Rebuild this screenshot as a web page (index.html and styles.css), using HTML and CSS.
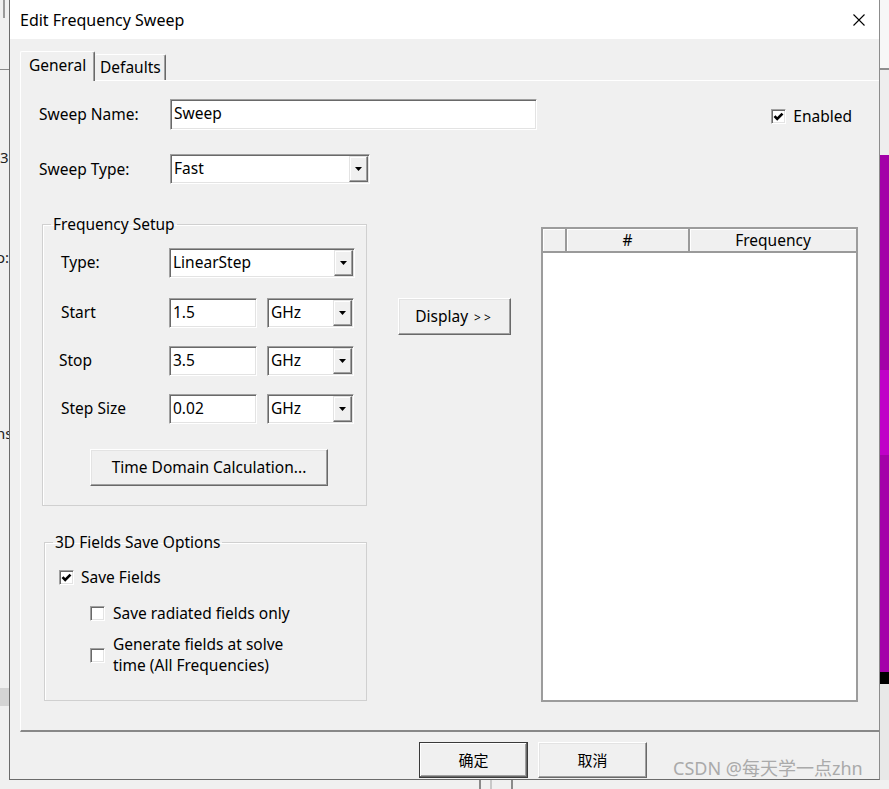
FILE: index.html
```html
<!DOCTYPE html>
<html>
<head>
<meta charset="utf-8">
<title>Edit Frequency Sweep</title>
<link rel="stylesheet" href="styles.css">
</head>
<body>
<div class="bg-left">
  <div class="bl-top"></div>
  <div class="bl-hline"></div>
  <span class="frag f1">3</span>
  <span class="frag f2">o:</span>
  <span class="frag f3">ns</span>
  <div class="bl-bottom"></div>
</div>
<div class="bg-right">
  <div class="br-top"></div>
  <div class="br-line"></div>
  <div class="br-mid"></div>
  <div class="br-purple"></div>
  <div class="br-magenta"></div>
  <div class="br-purple2"></div>
  <div class="br-black"></div>
  <div class="br-rest"></div>
</div>
<div class="bg-bottom">
  <span class="vl vl1"></span><span class="vl vl2"></span><span class="vl vl3"></span>
</div>

<div class="dialog">
  <div class="titlebar">
    <span class="title">Edit Frequency Sweep</span>
    <svg class="close" width="12" height="12" viewBox="0 0 12 12"><path d="M0.5 0.5 L11.5 11.5 M11.5 0.5 L0.5 11.5" stroke="#000" stroke-width="1.1" fill="none"/></svg>
  </div>
  <div class="dlg-body">
    <div class="tabs">
      <div class="tab active">General</div>
      <div class="tab">Defaults</div>
    </div>
    <div class="panel">
      <div class="row row-name">
        <span class="lbl">Sweep Name:</span>
        <div class="edit edit-name">Sweep</div>
        <div class="check enabled">
          <span class="cb"><svg width="13" height="13" viewBox="0 0 13 13"><path d="M2.5 6.2 L5.2 9 L10.5 3.6" stroke="#000" stroke-width="2.6" fill="none"/></svg></span>
          <span>Enabled</span>
        </div>
      </div>
      <div class="row row-type">
        <span class="lbl">Sweep Type:</span>
        <div class="combo combo-type"><span class="combo-text">Fast</span><span class="drop"><svg width="7" height="4" viewBox="0 0 7 4"><polygon points="0,0 7,0 3.5,4" fill="#000"/></svg></span></div>
      </div>

      <div class="main">
        <div class="leftcol">
          <fieldset class="group freq">
            <legend>Frequency Setup</legend>
            <div class="frow frow-type">
              <span class="flbl">Type:</span>
              <div class="combo combo-lin"><span class="combo-text">LinearStep</span><span class="drop"><svg width="7" height="4" viewBox="0 0 7 4"><polygon points="0,0 7,0 3.5,4" fill="#000"/></svg></span></div>
            </div>
            <div class="frow frow-start">
              <span class="flbl">Start</span>
              <div class="edit edit-val">1.5</div>
              <div class="combo combo-unit"><span class="combo-text">GHz</span><span class="drop"><svg width="7" height="4" viewBox="0 0 7 4"><polygon points="0,0 7,0 3.5,4" fill="#000"/></svg></span></div>
            </div>
            <div class="frow">
              <span class="flbl flbl-stop">Stop</span>
              <div class="edit edit-val">3.5</div>
              <div class="combo combo-unit"><span class="combo-text">GHz</span><span class="drop"><svg width="7" height="4" viewBox="0 0 7 4"><polygon points="0,0 7,0 3.5,4" fill="#000"/></svg></span></div>
            </div>
            <div class="frow">
              <span class="flbl">Step Size</span>
              <div class="edit edit-val">0.02</div>
              <div class="combo combo-unit"><span class="combo-text">GHz</span><span class="drop"><svg width="7" height="4" viewBox="0 0 7 4"><polygon points="0,0 7,0 3.5,4" fill="#000"/></svg></span></div>
            </div>
            <button class="btn btn-tdc">Time Domain Calculation...</button>
          </fieldset>

          <fieldset class="group fields">
            <legend>3D Fields Save Options</legend>
            <div class="check crow crow-save">
              <span class="cb"><svg width="13" height="13" viewBox="0 0 13 13"><path d="M2.5 6.2 L5.2 9 L10.5 3.6" stroke="#000" stroke-width="2.6" fill="none"/></svg></span>
              <span>Save Fields</span>
            </div>
            <div class="check crow crow-sub crow-rad">
              <span class="cb"></span>
              <span>Save radiated fields only</span>
            </div>
            <div class="check crow crow-sub crow-gen">
              <span class="cb"></span>
              <span class="two-line">Generate fields at solve<br>time (All Frequencies)</span>
            </div>
          </fieldset>
        </div>

        <button class="btn btn-display">Display <span class="gt">&gt;&gt;</span></button>

        <div class="grid">
          <div class="grid-head">
            <div class="hc hc0"></div>
            <div class="hc hc1">#</div>
            <div class="hc hc2">Frequency</div>
          </div>
          <div class="grid-body"></div>
        </div>
      </div>
    </div>
    <div class="footer">
      <button class="btn btn-foot btn-default">确定</button>
      <button class="btn btn-foot">取消</button>
    </div>
  </div>
</div>
<div class="watermark">CSDN @每天学一点zhn</div>
</body>
</html>
```

FILE: styles.css
```css
* { box-sizing: border-box; }
html, body { margin: 0; padding: 0; }
body {
  width: 889px;
  height: 789px;
  overflow: hidden;
  position: relative;
  background: #f0f0f0;
  font-family: "Noto Sans", "Noto Sans CJK SC", sans-serif;
  font-size: 15.5px;
  color: #000;
}

/* ---------- desktop behind the dialog ---------- */
.bg-left {
  position: absolute;
  left: 0; top: 0;
  width: 9px; height: 789px;
  background: #f0f0f0;
  overflow: hidden;
}
.bl-top { position: absolute; left: 3px; top: 0; width: 2px; height: 18px; background: #9a9a9a; }
.bl-hline { position: absolute; left: 0; top: 69px; width: 9px; height: 1px; background: #8a8a8a; }
.frag { position: absolute; font-size: 15px; line-height: 18px; color: #222; white-space: nowrap; }
.f1 { left: 0; top: 148px; }
.f2 { left: -4px; top: 248px; }
.f3 { left: -4px; top: 424px; }
.bl-bottom { position: absolute; left: 0; top: 688px; width: 9px; height: 18px; background: #d4d4d4; }

.bg-right {
  position: absolute;
  left: 880px; top: 0;
  width: 9px; height: 789px;
  background: #f0f0f0;
  display: flex;
  flex-direction: column;
}
.br-top { height: 68px; background: #f7f7f7; }
.br-line { height: 2px; background: #8e8e8e; }
.br-mid { height: 85px; background: #eeeeee; }
.br-purple { height: 215px; background: #a300a8; }
.br-magenta { height: 85px; background: #c000c8; }
.br-purple2 { height: 217px; background: #a400a9; }
.br-black { height: 12px; background: #000; }
.br-rest { flex: 1; background: #e8e8e8; }

.bg-bottom {
  position: absolute;
  left: 0; top: 780px;
  width: 889px; height: 9px;
  background: #f0f0f0;
}
.vl { position: absolute; top: 0; width: 2px; height: 9px; background: #8a8a8a; }
.vl1 { left: 479px; }
.vl2 { left: 490px; background: #c8c8c8; }
.vl3 { left: 511px; }

/* ---------- dialog ---------- */
.dialog {
  position: absolute;
  left: 9px; top: 0;
  width: 871px; height: 780px;
  background: #f0f0f0;
  border-left: 1px solid #6b6b6b;
  border-right: 1px solid #8c8c8c;
  border-bottom: 1px solid #6b6b6b;
  display: flex;
  flex-direction: column;
  overflow: hidden;
}
.titlebar {
  height: 39px;
  flex: none;
  background: #fff;
  display: flex;
  align-items: center;
  padding-left: 10px;
}
.title { font-size: 16px; line-height: 20px; }
.close { margin-left: auto; margin-right: 14px; }

.dlg-body {
  flex: 1;
  padding: 12px 0 0 10px;
  display: flex;
  flex-direction: column;
}

/* tabs */
.tabs {
  height: 29px;
  display: flex;
  align-items: flex-end;
  flex: none;
}
.tab {
  height: 26px;
  width: 71px;
  padding-left: 5px;
  line-height: 24px;
  background: #f0f0f0;
  border-top: 1px solid #fff;
  border-right: 1px solid #696969;
  box-shadow: inset -1px 0 #a0a0a0;
  border-radius: 2px 2px 0 0;
  white-space: nowrap;
}
.tab.active {
  height: 30px;
  width: 75px;
  margin-bottom: -1px;
  padding-left: 8px;
  line-height: 26px;
  border-left: 1px solid #fff;
  position: relative;
  z-index: 1;
}

/* panel */
.panel {
  flex: none;
  height: 652px;
  border-top: 1px solid #fff;
  border-left: 1px solid #fff;
  border-bottom: 2px solid #888;
  padding: 18px 0 0 18px;
  display: flex;
  flex-direction: column;
}

.row { display: flex; align-items: center; }
.row-name { height: 31px; }
.row-type { height: 30px; margin-top: 24px; }
.lbl { width: 131px; flex: none; padding-bottom: 1px; }

/* sunken edit / combo */
.edit, .combo {
  background: #fff;
  border: 1px solid;
  border-color: #a0a0a0 #fff #fff #a0a0a0;
  box-shadow: inset 1px 1px #696969, inset -1px -1px #e3e3e3;
}
.edit {
  display: flex;
  align-items: center;
  padding: 0 0 3px 3px;
  height: 30px;
}
.edit-name { width: 367px; height: 31px; }
.combo {
  display: flex;
  padding: 1px;
  height: 30px;
}
.combo-text {
  flex: 1;
  display: flex;
  align-items: center;
  padding: 0 0 2px 2px;
}
.drop {
  width: 19px;
  flex: none;
  background: #f0f0f0;
  border: 1px solid;
  border-color: #e3e3e3 #696969 #696969 #e3e3e3;
  box-shadow: inset -1px -1px #a0a0a0, inset 1px 1px #fff;
  display: flex;
  align-items: center;
  justify-content: center;
}
.combo-type { width: 200px; }

/* checkbox */
.check { display: flex; align-items: center; gap: 7px; }
.cb {
  width: 15px; height: 15px;
  flex: none;
  background: #fff;
  border: 1px solid;
  border-color: #a0a0a0 #fff #fff #a0a0a0;
  box-shadow: inset 1px 1px #696969, inset -1px -1px #e3e3e3;
  display: flex;
  align-items: center;
  justify-content: center;
}
.enabled {
  margin-left: auto;
  margin-right: 27px;
  align-self: flex-start;
  margin-top: 10px;
  line-height: 15px;
}

/* main area */
.main { display: flex; align-items: flex-start; }
.leftcol { display: flex; flex-direction: column; width: 328px; flex: none; }

.group {
  margin: 0;
  padding: 0;
  min-width: 0;
  border: 1px solid #d0d0d0;
  box-shadow: 1px 1px 0 #fff inset;
}
.group legend {
  padding: 0 2px;
  line-height: 18px;
  font-size: 15.5px;
}
.freq {
  margin: 31px 0 0 3px;
  width: 325px;
  padding: 15px 0 19px 18px;
}
.freq legend { margin-left: -10px; }
.frow { display: flex; align-items: center; height: 30px; margin-top: 18px; }
.frow-type { margin-top: 0; }
.frow-start { margin-top: 20px; }
.flbl { width: 108px; flex: none; padding-bottom: 2px; }
.flbl-stop { margin-left: -2px; width: 110px; }
.combo-lin { width: 186px; }
.edit-val { width: 88px; }
.combo-unit { width: 87px; margin-left: 10px; }

/* raised buttons */
.btn {
  font-family: "Noto Sans", "Noto Sans CJK SC", sans-serif;
  font-size: 15.5px;
  color: #000;
  background: #f0f0f0;
  border: 1px solid;
  border-color: #fff #696969 #696969 #fff;
  box-shadow: inset -1px -1px #a0a0a0, inset 1px 1px #e3e3e3;
  padding: 0 0 2px 0;
  margin: 0;
}
.btn-tdc {
  display: block;
  width: 238px;
  height: 37px;
  margin: 25px 0 0 29px;
}

.fields {
  margin: 27px 0 0 5px;
  width: 323px;
  padding: 16px 0 24px 14px;
}
.fields legend { margin-left: -6px; }
.crow { height: 21px; line-height: 21px; }
.crow-sub { padding-left: 31px; gap: 8px; }
.crow-rad { margin-top: 15px; }
.crow-gen { margin-top: 10px; height: 42px; }
.two-line { line-height: 21px; }

.btn-display {
  flex: none;
  width: 113px;
  height: 37px;
  margin: 114px 0 0 31px;
}
.gt { font-size: 12px; letter-spacing: 3px; margin-left: 2px; }

/* table */
.grid {
  flex: none;
  width: 317px;
  height: 475px;
  margin: 43px 0 0 30px;
  border: 2px solid #9c9c9c;
  background: #fff;
  display: flex;
  flex-direction: column;
}
.grid-head { display: flex; height: 24px; flex: none; }
.hc {
  background: #f0f0f0;
  border-right: 2px solid #9a9a9a;
  border-bottom: 2px solid #9a9a9a;
  box-shadow: inset 1px 1px #fff;
  display: flex;
  align-items: center;
  justify-content: center;
  line-height: 20px;
  padding-bottom: 1px;
}
.hc0 { width: 24px; }
.hc1 { width: 123px; }
.hc2 { flex: 1; border-right: none; }
.grid-body { flex: 1; }

/* footer */
.footer {
  display: flex;
  gap: 10px;
  padding: 10px 0 0 399px;
}
.btn-foot {
  width: 109px;
  height: 36px;
  font-family: "Noto Sans CJK SC", sans-serif;
  font-size: 15px;
}
.btn-default {
  border-color: #3a3a3a #3a3a3a #3a3a3a #3a3a3a;
  box-shadow: inset -1px -1px #696969, inset 1px 1px #fff, inset -2px -2px #a0a0a0;
}

.watermark {
  position: absolute;
  left: 673px;
  top: 758px;
  font-family: "Noto Sans", "Noto Sans CJK SC", sans-serif;
  font-size: 18px;
  line-height: 20px;
  color: #aaaaaa;
  white-space: nowrap;
}
```
